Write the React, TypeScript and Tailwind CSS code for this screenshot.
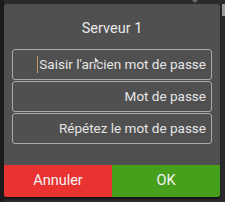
import React from "react";

export default function App() {
  const fields = ["Saisir l'ancien mot de passe", "Mot de passe", "Répétez le mot de passe"];
  return (
    <div
      className="relative w-[225px] h-[202px] bg-[#2a2a2a] overflow-hidden pt-[4px] pl-[4px]"
      style={{ fontFamily: "Roboto, 'Noto Sans', sans-serif" }}
    >
      <div className="absolute left-0 top-0 w-[4px] h-full bg-[#1b1b1b]" />
      <div className="absolute left-[222px] top-[4px] w-[3px] h-[12px] bg-[#9a9a9a]" />
      <div className="absolute left-[192px] top-0 w-0 h-0 border-l-[3px] border-r-[3px] border-t-[3px] border-l-transparent border-r-transparent border-t-[#6a6a6a]" />
      <div className="w-[216px] h-[193px] bg-[#505050] rounded-[3px] flex flex-col overflow-hidden shadow-[0_2px_2px_rgba(0,0,0,0.6)]">
        <div className="h-[45px] flex items-center justify-center text-[#e8e8e8] text-[14.5px] pt-[5px]">
          Serveur 1
        </div>
        <div className="flex flex-col gap-[1px] px-[8px]">
          {fields.map((f, i) => (
            <div
              key={i}
              className="relative h-[31px] border border-[#a8a8a8] rounded-[3px] flex items-center justify-end pr-[5px] text-[#e6e6e6] text-[13.5px] whitespace-nowrap"
            >
              {i === 0 && <span className="inline-block w-[1.5px] h-[17px] bg-[#c79a5a] mr-[1px]" />}
              {f}
            </div>
          ))}
        </div>
        <div className="flex-1" />
        <div className="flex h-[32px]">
          <div className="flex-1 bg-[#e83330] flex items-center justify-center text-[#f4f4f4] text-[14.5px]">
            Annuler
          </div>
          <div className="flex-1 bg-[#46a01c] flex items-center justify-center text-[#f4f4f4] text-[14.5px]">
            OK
          </div>
        </div>
      </div>
      <svg className="absolute left-[94px] top-[56px]" width="7" height="10" viewBox="0 0 7 10">
        <path d="M0.5 0.5 L0.5 8 L2.3 6.3 L3.6 9.2 L4.6 8.8 L3.4 5.9 L6 5.9 Z" fill="#e0e0e0" stroke="#333" strokeWidth="0.6" />
      </svg>
    </div>
  );
}
